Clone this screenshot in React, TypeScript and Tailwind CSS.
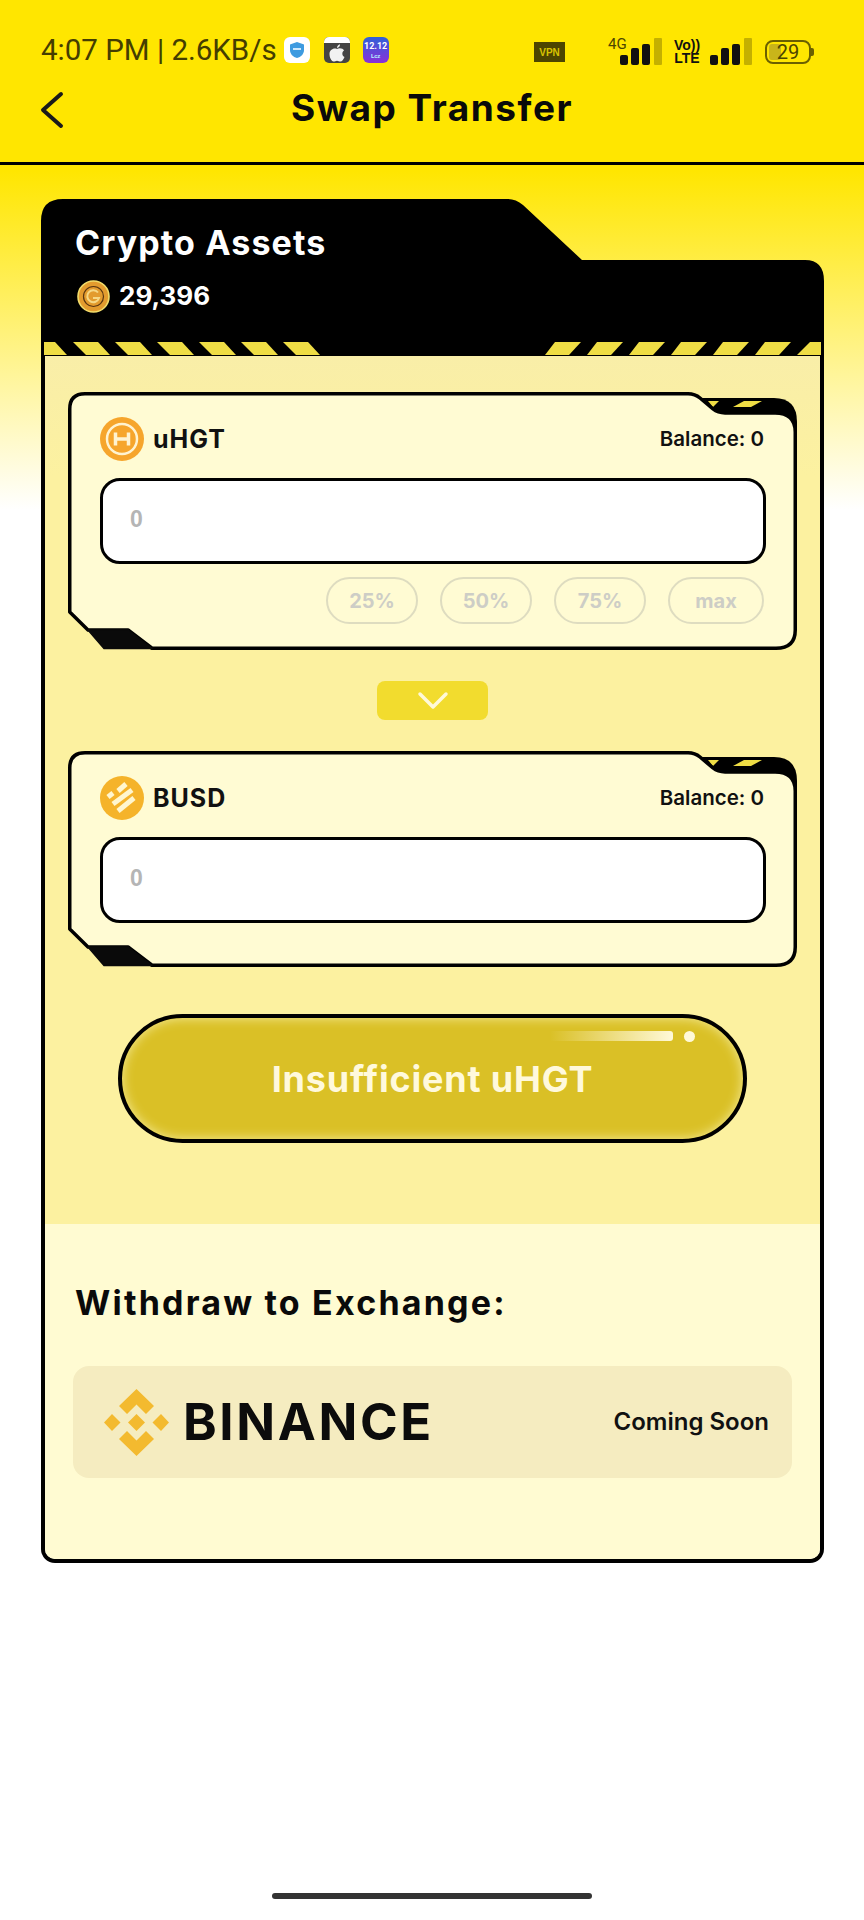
import { Fragment } from 'react';

const headFont = "font-['Inter','Liberation_Sans',sans-serif]";

const leftStripes = [0, 1, 2, 3, 4, 5];
const rightStripes = [0, 1, 2, 3, 4, 5];

const SignalBars = () => (
  <svg width="42" height="28" viewBox="0 0 42 28">
    <rect x="0" y="17" width="8" height="10" rx="2" fill="#111" />
    <rect x="11" y="10" width="8" height="17" rx="2" fill="#111" />
    <rect x="22" y="6" width="8" height="21" rx="2" fill="#111" />
    <rect x="34" y="0" width="8" height="27" rx="1" fill="#c4b000" />
  </svg>
);

const StatusBar = () => (
  <div className="flex h-[72px] items-end justify-between pr-[50px] pb-[6px] pl-[41px]">
    <div className="flex items-center">
      <span className="font-['Roboto',sans-serif] text-[29.500px] leading-[32px] text-[#453e00]">4:07 PM | 2.6KB/s</span>
      <span className="ml-[7px] flex h-[26px] w-[26px] items-center justify-center rounded-[6px] bg-white">
        <svg width="16" height="18" viewBox="0 0 16 18">
          <path d="M8 1 L15 3.500 V9 C15 13 12 16 8 17 C4 16 1 13 1 9 V3.500 Z" fill="#3d9be0" />
          <rect x="4" y="7" width="8" height="2" fill="#cfe9fb" />
        </svg>
      </span>
      <span className="ml-[14px] flex h-[26px] w-[26px] flex-col overflow-hidden rounded-[5px] bg-[#444]">
        <span className="h-[6px] w-full bg-white" />
        <svg width="26" height="20" viewBox="0 0 26 20">
          <path d="M13 6 C15 4.500 19 5 20 7.500 C17.500 9 18 13 20.500 14 C19.500 16.500 18 18.500 16.500 18.500 C15 18.500 14.500 17.700 13 17.700 C11.500 17.700 11 18.500 9.500 18.500 C7.500 18.500 5.500 14.500 5.500 11 C5.500 7 9.500 4.500 13 6 Z" fill="#f2f2f2" />
          <path d="M13 5 C13 3 14.500 1.500 16 1.300 C16.200 3 14.800 4.800 13 5 Z" fill="#f2f2f2" />
        </svg>
      </span>
      <span className="ml-[13px] flex h-[26px] w-[26px] flex-col items-center justify-center rounded-[6px] bg-[linear-gradient(180deg,#2f62d8,#8a2fd8)]">
        <span className="font-['Roboto',sans-serif] text-[9px] leading-[12px] font-bold text-white">12.12</span>
        <span className="font-['Roboto',sans-serif] text-[6px] leading-[8px] font-bold text-[#b5f0ff]">Lcz</span>
      </span>
    </div>
    <div className="flex items-center">
      <span className="flex h-[20px] w-[31px] items-center justify-center bg-[#4d4500] font-['Liberation_Sans',sans-serif] text-[10px] font-bold text-[#d8c400]">VPN</span>
      <span className="relative ml-[43px] flex h-[28px] items-end">
        <span className="absolute -top-[1px] left-0 font-['Roboto',sans-serif] text-[15px] leading-[14px] text-[#4d4500]">4G</span>
        <span className="ml-[12px]"><SignalBars /></span>
      </span>
      <span className="ml-[11px] flex w-[28px] flex-col items-center font-['Liberation_Sans',sans-serif] text-[14px] leading-[13px] font-bold text-[#111]">
        <span>Vo))</span>
        <span>LTE</span>
      </span>
      <span className="ml-[9px]"><SignalBars /></span>
      <span className="relative ml-[13px] flex h-[24px] w-[46px] items-center justify-center overflow-hidden rounded-[8px] border-2 border-[#6b6000] font-['Roboto',sans-serif] text-[20px] text-[#4d4500]">
        <span className="absolute top-[2px] bottom-[2px] left-[2px] w-[12px] rounded-[3px] bg-[#c9b51a]" />
        <span className="relative">29</span>
      </span>
      <span className="h-[8px] w-[3px] rounded-r-[2px] bg-[#6b6000]" />
    </div>
  </div>
);

const Header = () => (
  <div className="relative flex h-[93px] items-center justify-center border-b-[3px] border-black pb-[19px]">
    <svg className="absolute top-[19px] left-[38px]" width="28" height="38" viewBox="0 0 28 38">
      <polyline points="23,3 5,19 23,35" fill="none" stroke="#1a1a1a" strokeWidth="4" strokeLinecap="round" strokeLinejoin="round" />
    </svg>
    <h1 className={`${headFont} text-[37px] leading-[46px] font-bold tracking-[1.500px] text-[#0a0a0a]`}>Swap Transfer</h1>
  </div>
);

const CardTop = () => (
  <div className="relative h-[157px] px-[34px] pt-[22px]">
    <svg className="absolute inset-0" width="783" height="157" viewBox="0 0 783 157">
      <path d="M0 22 Q0 0 22 0 H467 Q475 0 482 6 L541 61 H764 Q783 61 783 82 V157 H0 Z" fill="#000" />
      <polygon points="3,143 14,143 26,156 3,156" fill="#efdd45" />
      {leftStripes.map((i) => {
        const x = 32 + i * 42;
        return <polygon key={i} points={`${x},143 ${x + 25},143 ${x + 37},156 ${x + 13},156`} fill="#efdd45" />;
      })}
      {rightStripes.map((i) => {
        const x = 504 + i * 42;
        return <polygon key={i} points={`${x + 10},143 ${x + 36},143 ${x + 24},156 ${x},156`} fill="#efdd45" />;
      })}
      <polygon points="769,143 780,143 780,156 756,156" fill="#efdd45" />
      <rect x="0" y="156" width="783" height="1" fill="#000" />
    </svg>
    <div className="relative">
      <div className={`${headFont} text-[34px] leading-[44px] font-bold tracking-[1.100px] text-white`}>Crypto Assets</div>
      <div className="mt-[14px] ml-[2px] flex items-center gap-[9px]">
        <svg width="33" height="33" viewBox="0 0 33 33">
          <circle cx="16.500" cy="16.500" r="15.500" fill="#e39b2e" stroke="#f2dc6a" strokeWidth="1.600" />
          <circle cx="16.500" cy="16.500" r="10" fill="none" stroke="#5a3510" strokeWidth="1.200" />
          <path d="M21 12.500 A6 6 0 1 0 22 18 H16" fill="none" stroke="#f6d886" strokeWidth="2" />
        </svg>
        <span className={`${headFont} text-[26px] leading-[34px] font-bold text-white`}>29,396</span>
      </div>
    </div>
  </div>
);

const Token = ({ name, children }: { name: string; children: React.ReactNode }) => (
  <div className="flex items-center gap-[9px]">
    {children}
    <span className={`${headFont} text-[25px] leading-[30px] font-bold tracking-[1px] text-[#111]`}>{name}</span>
  </div>
);

const UhgtIcon = () => (
  <svg width="44" height="44" viewBox="0 0 44 44">
    <circle cx="22" cy="22" r="22" fill="#f6a52c" />
    <circle cx="22" cy="22" r="15" fill="none" stroke="#fff3d0" strokeWidth="2.500" />
    <path d="M15.500 15.500 V28.500 M28.500 15.500 V28.500 M15.500 22 H28.500" fill="none" stroke="#fff3d0" strokeWidth="3.500" />
  </svg>
);

const BusdIcon = () => (
  <svg width="44" height="44" viewBox="0 0 44 44">
    <circle cx="22" cy="22" r="22" fill="#f5b32a" />
    <g fill="none" stroke="#fff6cf" strokeWidth="5">
      <path d="M18 15 L26 8" />
      <path d="M13 28 L32 14" />
      <path d="M18 35 L34 22" />
      <path d="M8 21 L13 17" />
    </g>
  </svg>
);

// the notched frame behind a token box
const BoxFrame = ({ h }: { h: number }) => (
  <svg className="absolute inset-0" width="729" height={h} viewBox={`0 0 729 ${h}`}>
    <path d="M628 6 H706 Q729 6 729 30 V44 H680 Z" fill="#000" />
    <polygon points="640,9 651,9 645,15" fill="#efdd45" />
    <polygon points="676,9 694,9 683,15 665,15" fill="#efdd45" />
    <path
      d={`M1.750 17 Q1.750 1.750 17 1.750 H620 Q627 1.750 632 6 L645 17 Q650 21 657 21 H707 Q727.250 21 727.250 40 V${h - 20} Q727.250 ${h - 1.75} 708 ${h - 1.75} H84 L60 ${h - 20} H20 L1.750 ${h - 38} Z`}
      fill="#fffbd3"
      stroke="#000"
      strokeWidth="3.500"
      strokeLinejoin="round"
    />
    <polygon points={`20,${h - 20} 60,${h - 20} 84,${h - 1.5} 36,${h - 1.5}`} fill="#0a0a0a" stroke="#0a0a0a" strokeWidth="1.500" strokeLinejoin="round" />
  </svg>
);

const TokenBox = ({
  name,
  icon,
  h,
  children,
}: {
  name: string;
  icon: React.ReactNode;
  h: number;
  children?: React.ReactNode;
}) => (
  <div className="relative mx-[23px] w-[729px]" style={{ height: h }}>
    <BoxFrame h={h} />
    <div className="relative pt-[25px] pr-[31px] pl-[32px]">
      <div className="flex items-center justify-between pr-[2px]">
        <Token name={name}>{icon}</Token>
        <span className={`${headFont} text-[20.500px] leading-[28px] font-semibold text-[#111]`}>Balance: 0</span>
      </div>
      <div className="mt-[17px] flex h-[86px] items-center rounded-[20px] border-[3px] border-black bg-white px-[27px] pb-[3px] font-['Liberation_Sans',sans-serif] text-[23px] font-bold text-[#b5b5b5]">
        0
      </div>
      {children}
    </div>
  </div>
);

const PctButtons = () => (
  <div className="mt-[13px] flex justify-end gap-[22px] pr-[2px]">
    {[
      { label: '25%', w: 'w-[92px]' },
      { label: '50%', w: 'w-[92px]' },
      { label: '75%', w: 'w-[92px]' },
      { label: 'max', w: 'w-[96px]' },
    ].map((p) => (
      <Fragment key={p.label}>
        <span
          className={`${p.w} ${headFont} flex h-[47px] items-center justify-center rounded-[24px] border-2 border-[#dedcc0] text-[20px] font-bold text-[#cdcdc6]`}
        >
          {p.label}
        </span>
      </Fragment>
    ))}
  </div>
);

const SwapCard = () => (
  <div className="overflow-hidden rounded-b-[14px] border-x-[4px] border-b-[4px] border-black">
    <div className="h-[868px] bg-[linear-gradient(180deg,#f9eea8,#fcf1a0_120px)] pt-[36px]">
      <TokenBox name="uHGT" icon={<UhgtIcon />} h={258}>
        <PctButtons />
      </TokenBox>
      <div className="mt-[31px] flex justify-center">
        <span className="flex h-[39px] w-[111px] items-center justify-center rounded-[8px] bg-[#f2dc2e]">
          <svg width="32" height="20" viewBox="0 0 32 20">
            <polyline points="3,3 16,16 29,3" fill="none" stroke="#fff9d8" strokeWidth="3.500" strokeLinecap="round" strokeLinejoin="round" />
          </svg>
        </span>
      </div>
      <div className="mt-[31px]">
        <TokenBox name="BUSD" icon={<BusdIcon />} h={216} />
      </div>
      <div className="relative mx-[73px] mt-[47px] flex h-[129px] items-center justify-center overflow-hidden rounded-[65px] border-4 border-black bg-[#dac026] shadow-[inset_0_0_12px_#f5ec9c]">
        <span className="absolute top-[13px] right-[70px] h-[10px] w-[123px] rounded-r-[3px] bg-[linear-gradient(90deg,rgba(255,249,216,0),#fff9d8)]" />
        <span className="absolute top-[13px] right-[48px] h-[11px] w-[11px] rounded-full bg-[#fff9d8]" />
        <span className={`${headFont} text-[36px] font-bold tracking-[0.800px] text-[#fff9dc]`}>Insufficient uHGT</span>
      </div>
    </div>
    <div className="h-[335px] bg-[#fffbd2] px-[28px] pt-[56px]">
      <h2 className={`${headFont} ml-[2px] text-[34px] leading-[46px] font-bold tracking-[2.200px] text-[#0a0a0a]`}>Withdraw to Exchange:</h2>
      <div className="mt-[40px] flex h-[112px] items-center justify-between rounded-[16px] bg-[#f5ecc0] pr-[23px] pl-[31px]">
        <div className="flex items-center gap-[14px]">
          <svg width="65" height="67" viewBox="0 0 65 67">
            <g fill="#f3ba2f">
              <polygon points="32.500,0 50,17 42,25 32.500,15.500 23,25 15,17" />
              <polygon points="32.500,67 50,50 42,42 32.500,51.500 23,42 15,50" />
              <polygon points="8,25 16.500,33.500 8,42 0,33.500" />
              <polygon points="57,25 65,33.500 57,42 48.500,33.500" />
              <polygon points="32.500,25 41,33.500 32.500,42 24,33.500" />
            </g>
          </svg>
          <span className="font-['Inter',sans-serif] text-[51px] leading-[56px] font-bold tracking-[2.600px] text-[#0c0c0c]">BINANCE</span>
        </div>
        <span className={`${headFont} text-[24px] font-semibold text-[#111]`}>Coming Soon</span>
      </div>
    </div>
  </div>
);

const App = () => (
  <div className="flex h-[1920px] flex-col bg-[linear-gradient(180deg,#ffe600_0px,#ffe600_170px,#fff_510px)]">
    <StatusBar />
    <Header />
    <div className="mx-[41px] mt-[34px] w-[783px]">
      <CardTop />
      <SwapCard />
    </div>
    <div className="mt-auto mb-[21px] flex justify-center">
      <span className="h-[6px] w-[320px] rounded-full bg-[#333]" />
    </div>
  </div>
);

export default App;
